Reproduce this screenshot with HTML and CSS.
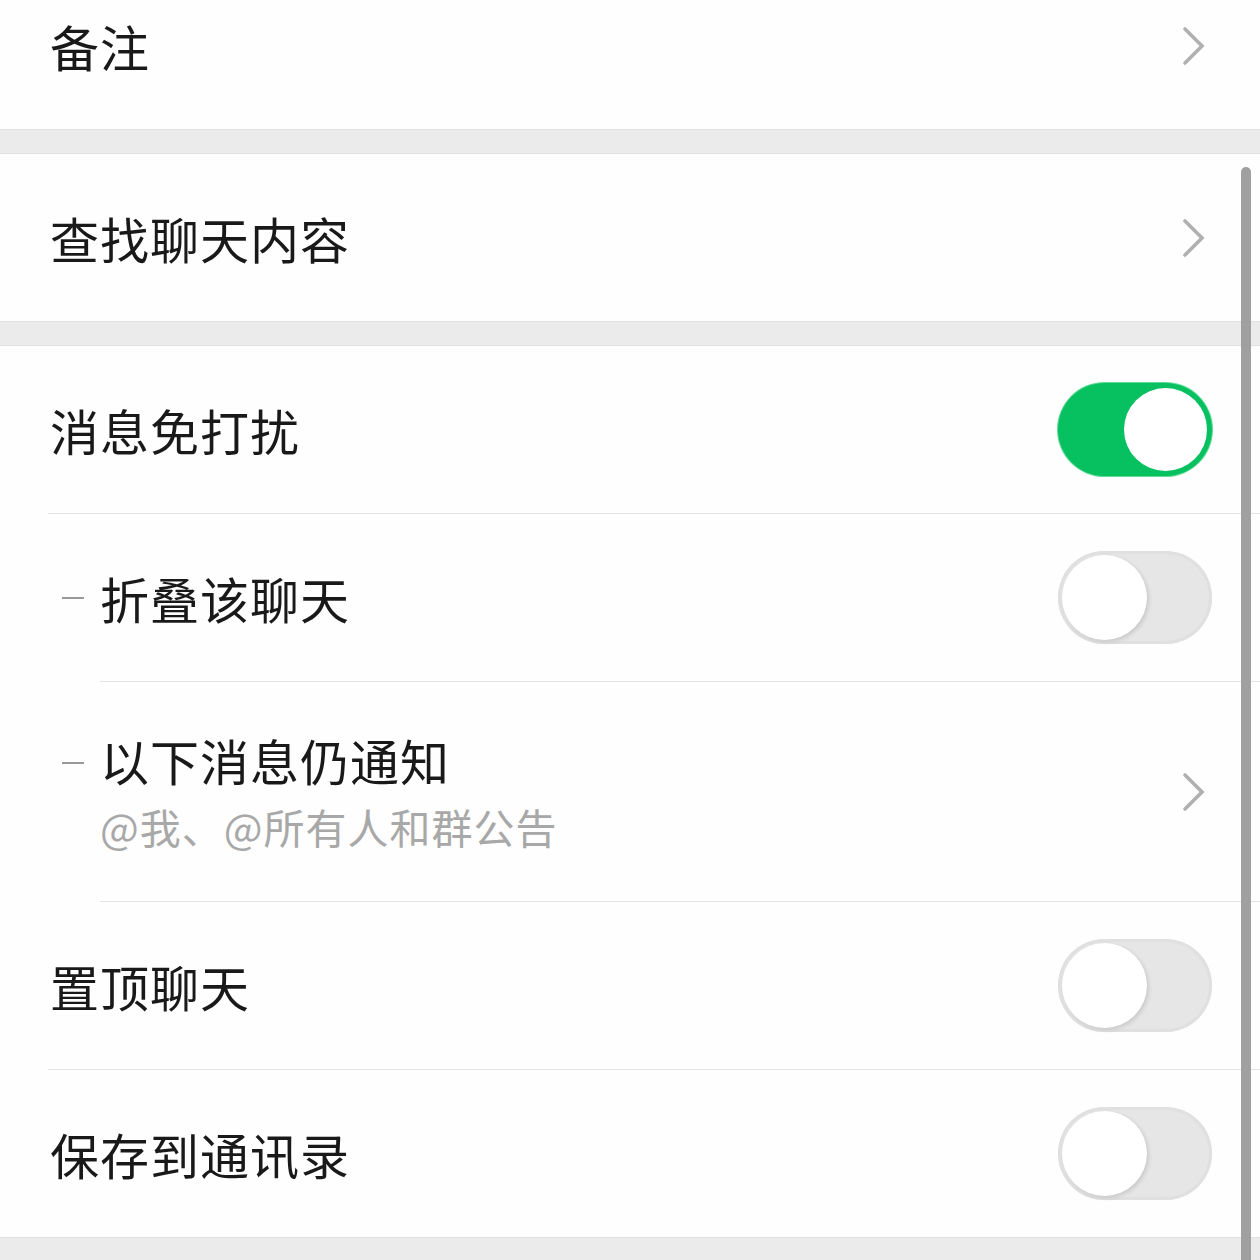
FILE: index.html
```html
<!DOCTYPE html>
<html lang="zh-CN">
<head>
<meta charset="utf-8">
<link rel="stylesheet" href="styles.css">
</head>
<body>
<div class="page">
  <div class="group first">
    <div class="row">
      <div class="label">备注</div>
      <svg class="chev" viewBox="0 0 24 40"><path d="M3 3 L20 20 L3 37"/></svg>
    </div>
  </div>
  <div class="gap"></div>
  <div class="group">
    <div class="row">
      <div class="label">查找聊天内容</div>
      <svg class="chev" viewBox="0 0 24 40"><path d="M3 3 L20 20 L3 37"/></svg>
    </div>
  </div>
  <div class="gap"></div>
  <div class="group">
    <div class="row">
      <div class="label">消息免打扰</div>
      <div class="switch on"><div class="knob"></div></div>
    </div>
    <div class="divider d48"></div>
    <div class="row sub">
      <span class="dash"></span>
      <div class="label">折叠该聊天</div>
      <div class="switch"><div class="knob"></div></div>
    </div>
    <div class="divider d100"></div>
    <div class="row sub tall">
      <span class="dash"></span>
      <div class="texts">
        <div class="label">以下消息仍通知</div>
        <div class="desc">@我、@所有人和群公告</div>
      </div>
      <svg class="chev" viewBox="0 0 24 40"><path d="M3 3 L20 20 L3 37"/></svg>
    </div>
    <div class="divider d100"></div>
    <div class="row">
      <div class="label">置顶聊天</div>
      <div class="switch"><div class="knob"></div></div>
    </div>
    <div class="divider d48"></div>
    <div class="row">
      <div class="label">保存到通讯录</div>
      <div class="switch"><div class="knob"></div></div>
    </div>
  </div>
  <div class="gap"></div>
</div>
<div class="scrollbar"></div>
</body>
</html>
```
FILE: styles.css
```css
html, body {
  margin: 0;
  padding: 0;
  background: #ffffff;
  overflow: hidden;
}
body {
  width: 1260px;
  height: 1260px;
  position: relative;
  font-family: "Noto Sans CJK SC", "Noto Sans", sans-serif;
}
.page {
  margin-top: -38px;
}
.group {
  background: #fefefe;
}
.gap {
  height: 23px;
  background: #ebebeb;
  border-top: 1px solid #e2e2e2;
  border-bottom: 1px solid #e0e0e0;
}
.row {
  height: 167px;
  display: flex;
  align-items: center;
  padding: 0 48px 0 50px;
  box-sizing: border-box;
}
.row.sub {
  padding-left: 62px;
}
.row.tall {
  height: 219px;
}
.label {
  font-size: 49px;
  color: #191919;
  line-height: 1;
  flex: 1;
  letter-spacing: 1px;
}
.texts {
  flex: 1;
  display: flex;
  flex-direction: column;
  margin-top: -2px;
}
.texts .label {
  flex: none;
}
.desc {
  margin-top: 22px;
  font-size: 41px;
  line-height: 1;
  color: #a8a8a8;
  letter-spacing: 1px;
}
.dash {
  width: 22px;
  height: 2px;
  background: #999999;
  margin-right: 16px;
  flex: none;
}
.row.tall .dash {
  align-self: flex-start;
  margin-top: 80px;
}
.chev {
  width: 24px;
  height: 40px;
  margin-right: 6px;
  flex: none;
}
.chev path {
  fill: none;
  stroke: #b0b0b0;
  stroke-width: 3.6;
  stroke-linecap: round;
  stroke-linejoin: miter;
}
.divider {
  height: 1px;
  background: #e3e3e3;
}
.d48 { margin-left: 48px; }
.d100 { margin-left: 100px; }
.switch {
  width: 154px;
  height: 93px;
  border-radius: 47px;
  background: #e6e6e7;
  position: relative;
  flex: none;
  box-sizing: border-box;
  box-shadow: inset 0 0 0 3px #e0e0e0;
}
.switch .knob {
  position: absolute;
  top: 4px;
  left: 4px;
  width: 85px;
  height: 85px;
  border-radius: 50%;
  background: #ffffff;
  box-shadow: 2px 2px 4px rgba(0,0,0,0.12), 0 0 0 1px #e4e4e4;
}
.switch.on {
  background: #07c160;
  box-shadow: 0 0 0 1px #5fdc97;
}
.switch.on .knob {
  left: auto;
  right: 5px;
  top: 5px;
  width: 83px;
  height: 83px;
  box-shadow: none;
}
.scrollbar {
  position: absolute;
  left: 1241px;
  top: 167px;
  width: 10px;
  height: 1120px;
  border-radius: 5px;
  background: #a0a0a0;
}
```
